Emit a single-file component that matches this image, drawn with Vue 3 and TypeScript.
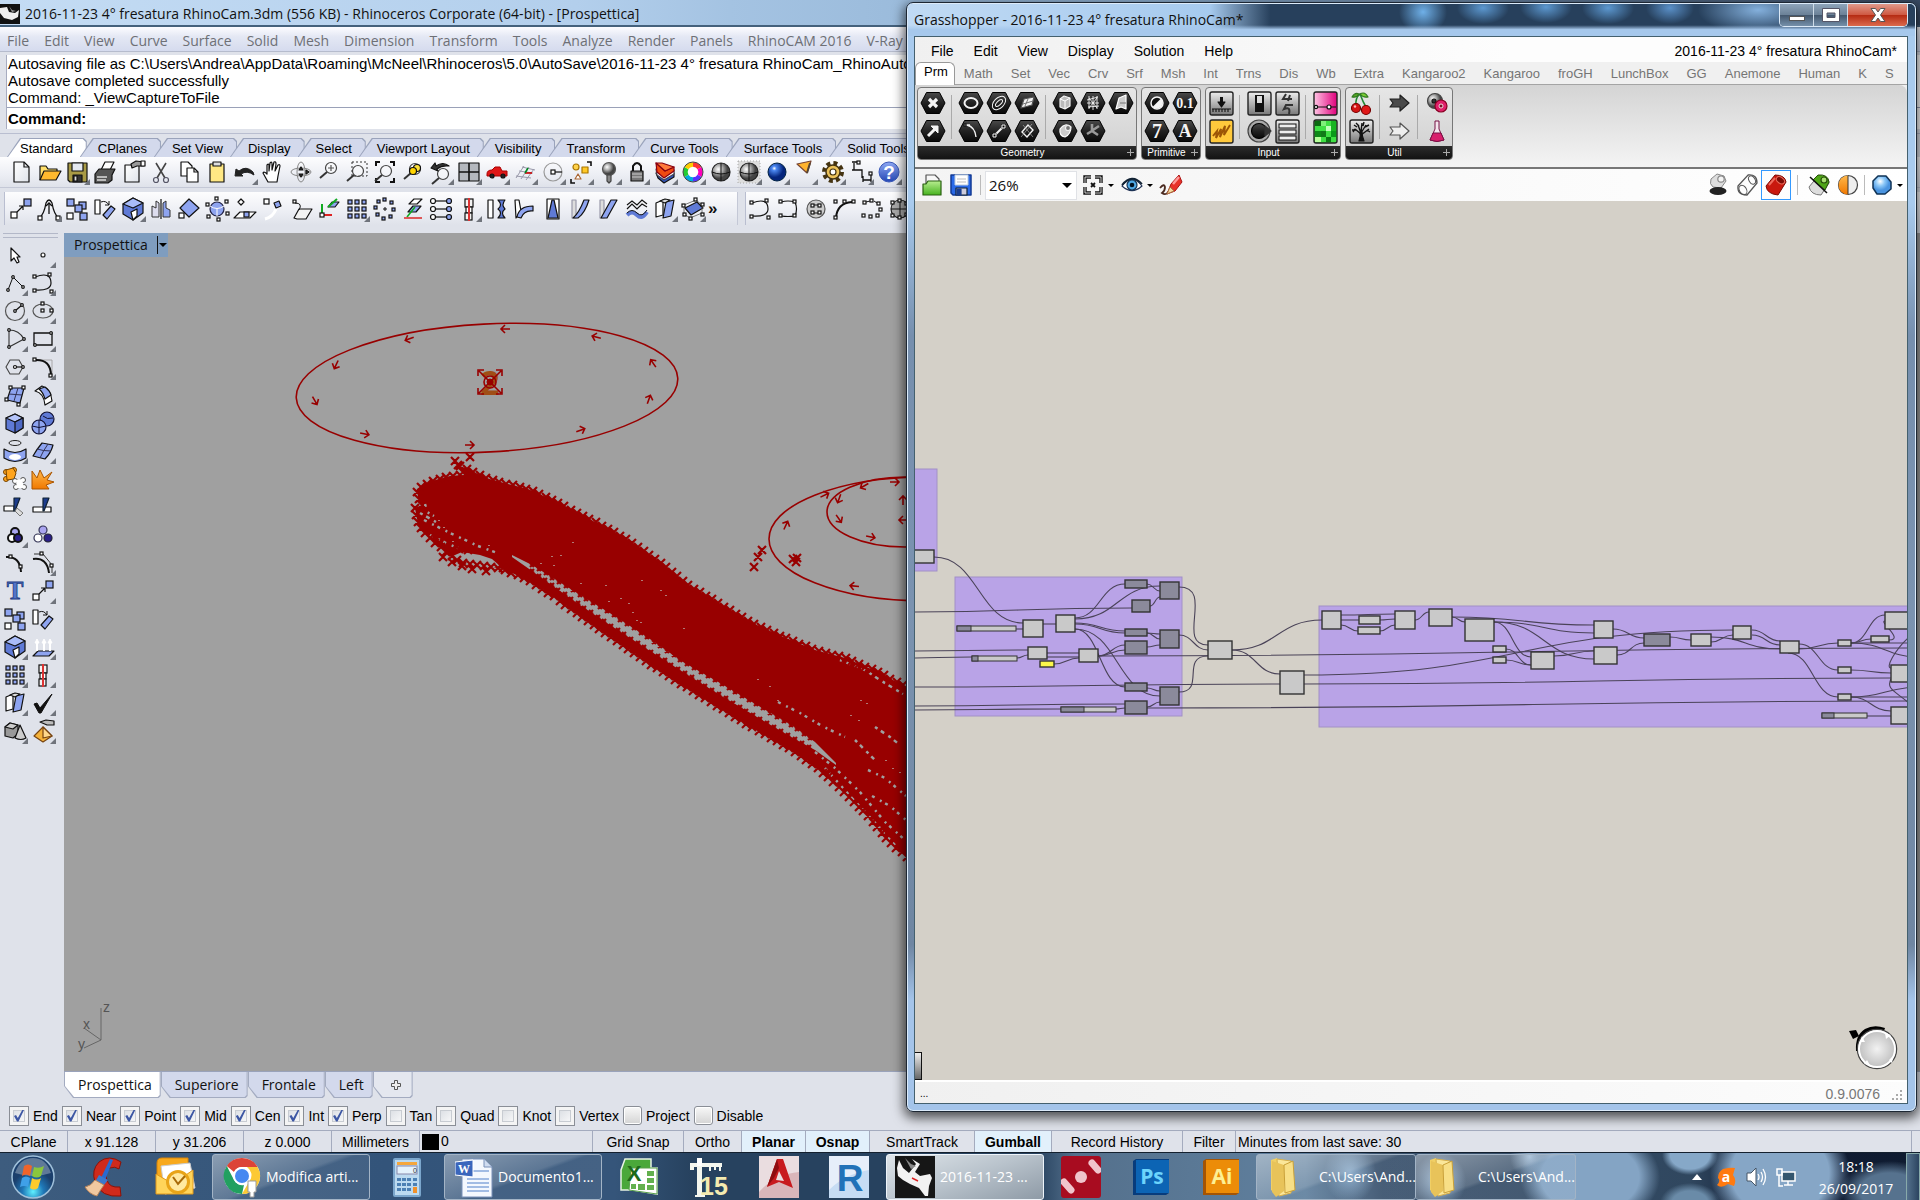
<script setup lang="ts">
import { ref } from 'vue'

type Pt = [number, number]

/* ---------- icon drawing helpers, all on a 28 x 28 box ---------- */
const K = '#111'
const sq = (x: number, y: number, s = 5, f = '#fff') =>
  `<rect x="${x}" y="${y}" width="${s}" height="${s}" fill="${f}" stroke="${K}" stroke-width="1.2"/>`
const ln = (d: string, w = 1.2, c = K) =>
  `<path d="${d}" fill="none" stroke="${c}" stroke-width="${w}"/>`
const sh = (d: string, f: string, c = K, w = 1.2) =>
  `<path d="${d}" fill="${f}" stroke="${c}" stroke-width="${w}" stroke-linejoin="round"/>`
const ci = (x: number, y: number, r: number, f = 'none', c = K, w = 1.2) =>
  `<circle cx="${x}" cy="${y}" r="${r}" fill="${f}" stroke="${c}" stroke-width="${w}"/>`
const tx = (x: number, y: number, s: number, t: string, f: string, fam = 'Liberation Sans', w = 700) =>
  `<text x="${x}" y="${y}" font-size="${s}" font-family="${fam}" font-weight="${w}" text-anchor="middle" fill="${f}">${t}</text>`
const B = '#8ea4f0'
const B2 = '#5f7ad6'
const G = '#888'
const lens = (x: number, y: number) =>
  ci(x, y, 5.5, 'rgba(255,255,255,.4)', '#444') + ln(`M${x - 4} ${y + 4}L${x - 11} ${y + 10}`, 2, '#333')
const corners = 'M5 8V4H9M19 4H23V8M23 20V24H19M9 24H5V20'
const hex = (inner: string) =>
  sh('M2 14L7.5 3.5H20.5L26 14L20.5 24.5H7.5Z', 'url(#gHex)', '#000', 1) + inner
const tile = (inner: string, f = 'url(#gTile)') =>
  `<rect x="3" y="3" width="23" height="23" rx="2" fill="${f}" stroke="#222" stroke-width="1.4"/>` + inner
const W = '#f4f4f4'

const icons: Record<string, string> = {
  new: sh('M7 4H17L22 9V24H7Z', 'url(#gPaper)') + ln('M17 4V9H22'),
  open: sh('M5 22V8H11L13 11H22V14', '#ffdf6a') + sh('M5 22L9 13H26L21 22Z', '#ffb92e'),
  save: sh('M5 5H24V24H7L5 22Z', '#a89a45') + sh('M9 5H20V13H9Z', '#e4e8f0') + sh('M10 17H19V24H10Z', '#333') + sh('M11 18H14V23H11Z', '#ddd'),
  print: sh('M10 12L14 4H23L19 12Z', '#fff') + sh('M4 16L8 11H24L21 17V22L17 25H4Z', '#555') + ln('M6 19H16M6 22H15', 1.5, '#ddd'),
  props: sh('M6 7H20V24H6Z', 'url(#gPaper)') + sh('M12 6L17 3L25 4V8L18 8L13 10Z', '#999') + sh('M22 3H26V8H22Z', '#fff'),
  cut: ln('M9 5L18 20M19 5L10 20', 1.6, '#444') + ci(9, 22, 2.5, 'none', '#556') + ci(19, 22, 2.5, 'none', '#556'),
  copy: sh('M6 4H13L17 8V18H6Z', '#fff') + sh('M12 10H19L23 14V24H12Z', '#fff') + ln('M19 10V14H23'),
  paste: sh('M7 6H21V24H7Z', '#ffe884') + sh('M10 4H18V8H10Z', '#ddd'),
  undo: sh('M4 18L5 11L8 13Q15 7 22 14L23 17Q16 12 10 16L12 18Z', '#222', '#222', 1),
  pan: sh('M9 24L4 15Q5 13 8 16L8 7Q10 5 10 8V13L11 5Q13 3 13 6V12L15 4Q17 3 17 6L16 13L19 7Q21 6 21 8L19 18L18 24Z', '#fff'),
  rotate: `<ellipse cx="14" cy="14" rx="10" ry="4" fill="none" stroke="${G}"/><ellipse cx="14" cy="14" rx="4" ry="10" fill="none" stroke="${G}"/>` + sh('M14 9L16 12H12ZM14 19L12 16H16Z', '#333') + sh('M19 12L22 14L19 16Z', '#555'),
  zoom: lens(16, 10) + ln('M13 10H19M16 7V13', 1.2, '#555'),
  zoomwin: `<rect x="9" y="4" width="15" height="14" fill="none" stroke="#333" stroke-dasharray="2 2"/>` + lens(15, 13),
  zoomext: ln(corners, 2) + lens(15, 13),
  zoomsel: lens(16, 11) + ci(18, 10, 3.5, '#ffe23c') + ci(14, 13, 3.5, '#ffd400'),
  zoomback: lens(16, 16) + sh('M4 10L8 5L9 8Q16 3 22 8Q15 7 10 11L11 13Z', '#333'),
  four: sh('M4 5H24V23H4Z', '#b4b8be') + ln('M14 5V23M4 14H24', 1.6),
  car: sh('M4 16Q4 12 9 12L12 9H17L19 13H24V18H4Z', '#e01818', '#a00', 1) + ci(9, 18, 2, '#222') + ci(20, 18, 2, '#222'),
  cplane: ln('M5 20L13 8M10 21L18 9M15 22L23 11M5 18L20 20M8 13L22 15M11 9L24 12', 1, '#99a') + ln('M14 15H21', 1.6, '#c00') + ln('M14 15L17 10', 1.6, '#082'),
  circ: ci(14, 14, 9, 'none', '#999') + sq(12, 12, 4) + ln('M16 14H23'),
  snap: ci(9, 9, 3, '#ffd24a', '#a70') + sh('M15 9H21V15H15Z', '#ffc928', '#a70') + sh('M11 16L14 21H8Z', '#fff', '#a63') + ln('M20 4H24V8M8 25H4V21', 1.6),
  bulb: ci(14, 11, 6.5, 'url(#gGrey)', '#555') + sh('M12 17H16V23L14 25L12 23Z', '#888', '#444'),
  lock: ln('M10 14V8Q14 2 18 8V14', 2) + sh('M8 13H20V23H8Z', '#777') + ln('M9 16H19M9 19H19', 1, '#ccc'),
  layers: sh('M5 15L13 21L23 15V19L13 25L7 20Z', '#3357c0') + sh('M5 11L13 19L23 12V16L13 22L6 17Z', '#fff', '#445') + sh('M5 5L14 13L23 9V13L13 20L6 14Z', '#f04a12', '#801') + sh('M5 5L11 5L23 9L14 13Z', '#ff7a3c', '#801'),
  wheel: ci(14, 14, 7, '#fff', '#888', 0) + '<g fill="none" stroke-width="4.5"><path d="M14 6.5A7.5 7.5 0 0 1 20.5 10.2" stroke="#f33"/><path d="M20.5 10.2A7.5 7.5 0 0 1 20.5 17.8" stroke="#f0b"/><path d="M20.5 17.8A7.5 7.5 0 0 1 14 21.5" stroke="#53f"/><path d="M14 21.5A7.5 7.5 0 0 1 7.5 17.8" stroke="#0ad"/><path d="M7.5 17.8A7.5 7.5 0 0 1 7.5 10.2" stroke="#2c3"/><path d="M7.5 10.2A7.5 7.5 0 0 1 14 6.5" stroke="#fc0"/></g>' + ci(14, 14, 10, 'none', '#444', 1),
  sphere: ci(14, 14, 9, 'url(#gGrey)', '#222') + ln('M14 5V23M5 14Q14 18 23 14', 1),
  sphere2: '<rect x="3" y="3" width="22" height="22" fill="#ddd" stroke="#aaa" stroke-dasharray="1 2"/>' + ci(14, 14, 9, 'url(#gGrey)', '#222') + ln('M14 5V23M5 14Q14 18 23 14', 1),
  ball: ci(14, 14, 9, 'url(#gBall)', '#024', 1),
  spot: sh('M6 6L20 3L16 15Z', '#ffb32e', '#743') + ln('M19 5L16 15', 2, '#543'),
  gear: '<circle cx="14" cy="14" r="8.5" fill="none" stroke="#443311" stroke-width="5" stroke-dasharray="3.7 3"/>' + ci(14, 14, 7, '#ecc25a', '#431', 1.5) + ci(14, 14, 3, '#fff', '#431'),
  dim: ln('M5 4H12M5 12H15V20M7 5V12M16 18V24M24 16V24M16 22H24', 1.3) + sq(10, 3, 3) + sq(22, 14, 3),
  help: ci(14, 14, 10, 'url(#gHelp)', '#3a58b8', 1) + tx(14, 21, 19, '?', '#fff'),

  move: sq(4, 17, 6) + sq(17, 4, 7, B) + ln('M10 17L16 11M12 11H16V15', 1.2),
  bend: ln('M4 23Q9 20 11 8Q14 2 17 8Q19 20 24 23M14 8V19', 1.3) + ln('M11 11L14 8L17 11', 1.3) + sq(3, 21, 4) + sq(21, 21, 4),
  copyobj: sq(4, 4, 7, B) + sq(4, 18, 6) + sq(16, 7, 7, B) + sq(12, 10, 7, B) + sq(17, 18, 7, B),
  rot2: sh('M4 5H9V19H4Z', '#fff') + sh('M12 20L20 11L24 14L16 24Z', B) + ln('M10 7Q15 5 18 10M14 10H18V6', 1),
  box: sh('M4 9L14 3L24 8V18L14 25L4 19Z', B2) + sh('M4 9L14 3L24 8L14 13Z', '#a9bcf8') + sh('M12 17L18 14V21L14 25Z', '#fff'),
  mirror: ln('M14 4V24', 1.2) + sh('M12 8L9 6L9 13L5 11V22H12Z', '#dde', '#333', 1) + sh('M16 8L19 6L19 13L23 15V22H16Z', B, '#333', 1),
  orient: sh('M14 4L24 13L14 22L5 13Z', B) + sq(4, 18, 5),
  cage: ci(14, 14, 7, B, '#224') + ln('M7 11Q14 16 21 11M14 14V21', 1, '#fff') + sq(3, 8, 3) + sq(12, 2, 3) + sq(22, 5, 3) + sq(4, 20, 3) + sq(14, 23, 3) + sq(23, 17, 3),
  project: sh('M10 4L13 7L10 10L7 7Z', '#fff') + sh('M3 23L9 17H25L19 23Z', '#fff') + sq(13, 17, 5, B),
  arcput: sq(5, 4, 5) + sh('M15 8L20 6L22 11L17 13Z', B) + ln('M17 14Q14 22 6 24', 3, '#fff'),
  shear: sh('M7 23L12 14H25L19 24H10Z', '#f3f3f3') + sq(6, 5, 3) + ln('M8 8Q16 8 12 15', 1),
  axes: ln('M7 10V20H17', 2, '#d22') + ln('M7 18V9', 2, '#1a2') + sh('M13 12L17 7H24L20 12Z', B) + ln('M13 12L22 4', 2, '#1a2') + sq(5, 18, 4),
  grid: [5, 12, 19].map(x => [5, 12, 19].map(y => sq(x, y, 4, B)).join('')).join(''),
  polar: [[12, 3], [19, 6], [21, 13], [18, 20], [11, 22], [5, 18], [3, 11], [6, 5]].map(p => sq(p[0], p[1], 3, B)).join('') + ln('M14 12V16M12 14H16', 1),
  flow: sh('M10 9L15 4H23L18 9Z', '#fff') + sh('M9 17L14 11H22L17 17Z', B) + ln('M8 22L16 12', 1.6, '#1a2') + ln('M5 23H23', 1.6, '#d33'),
  pts: [6, 14, 22].map(y => ci(6, y, 2.5, '#fff') + ln(`M9 ${y}H19`, 1.2) + ci(22, y, 2.5, B)).join(''),
  align: sq(10, 4, 8, '#f2f2f2') + sq(11, 12, 6) + sq(10, 18, 7, '#f2f2f2') + ln('M14 3V26', 2, '#d33'),
  twist: sh('M5 5H10V23H5Z', '#fff') + sh('M15 5H22Q18 10 22 14Q17 18 22 23H15Q20 18 15 14Q20 10 15 5Z', B2),
  arcb: sh('M4 5H8L10 16L5 23Z', '#fff') + sh('M6 22Q8 11 22 11V16Q13 15 10 23Z', B),
  taper: sh('M8 4H20V24H8Z', '#fff') + sh('M13 5L9 23H19L15 5Z', B2),
  flowb: sh('M5 5H9V23H5Z', '#ddd', '#99a') + sh('M6 23Q12 18 17 5H22Q18 18 11 23Z', B),
  shearb: sh('M5 5H9V23H5Z', '#ddd', '#99a') + sh('M6 23L16 5H22L12 23Z', B),
  smooth: ln('M4 10L9 6L14 10L19 5L24 9M4 14L9 9L14 14L19 9L24 12', 1.2) + ln('M4 20Q9 15 14 20T24 17', 4, B2) + ln('M4 18Q9 13 14 18T24 15', 1),
  book: sh('M5 8L12 5V20L5 22Z', '#fff') + sh('M15 7L23 5L20 21L12 23Z', B) + sh('M9 6L14 4L19 5L14 8Z', '#ddd'),
  cage2: sh('M6 13L18 7L24 13L12 20Z', B2) + ln('M5 10L17 5L23 10V18L11 23L5 19Z', .8, '#555') + sq(3, 9, 3) + sq(15, 3, 3) + sq(22, 8, 3) + sq(4, 18, 3) + sq(10, 22, 3) + sq(22, 18, 3),

  c1: ln('M6 8Q22 2 22 14Q22 22 6 21', 1.2) + sq(4, 6, 3) + sq(19, 4, 3) + sq(4, 20, 3) + sq(21, 21, 3),
  c2: ln('M7 7Q14 5 21 7Q24 14 21 21Q14 22 7 21', 1.2) + sq(5, 5, 3) + sq(19, 5, 3) + sq(5, 19, 3) + sq(19, 19, 3),
  c3: ci(14, 14, 9, '#ccc', '#555') + sq(9, 9, 3) + sq(16, 9, 3) + sq(9, 16, 3) + sq(16, 16, 3) + ln('M12 10H16M12 18H16', 1),
  c4: ln('M6 23Q7 8 22 7', 2) + sq(4, 21, 3) + sq(4, 5, 3) + sq(13, 5, 3) + sq(22, 5, 3),
  c5: [[5, 6], [12, 4], [19, 7], [21, 13], [18, 19], [11, 20], [4, 19]].map(p => sq(p[0], p[1], 3)).join('') + ln('M8 7L12 6M16 6L19 8', 1),
  c6: ci(14, 14, 9, '#aaa', '#222') + ln('M14 5V23M5 14H23', 1) + [[5, 6], [12, 4], [19, 7], [5, 19], [12, 21], [19, 18]].map(p => sq(p[0], p[1], 3)).join(''),

  cursor: sh('M10 7V20L13 17L16 22L18 21L16 16H19Z', '#fff'),
  point: ci(14, 14, 2, '#fff', '#222'),
  pline: ln('M7 21L12 8L22 18', 1) + ci(7, 21, 1.3, '#fff') + ci(12, 8, 1.3, '#fff') + ci(22, 18, 1.3, '#fff'),
  circle: ci(14, 14, 9.5, 'none', '#555') + ln('M14 14L21 8') + ci(14, 14, 1.3, '#fff') + ci(21, 8, 1.3, '#fff'),
  ellipse: '<ellipse cx="14" cy="14" rx="10" ry="7" fill="none" stroke="#555" stroke-width="1.2"/>' + sq(12, 5, 3) + sq(12, 12, 3) + sq(21, 12, 3),
  arc: ln('M8 5V22L23 14Q18 5 8 5', 1.1, '#333') + ci(8, 5, 1.3, '#fff') + ci(8, 22, 1.3, '#fff') + ci(23, 14, 1.3, '#fff'),
  rect: ln('M5 8H23V20H5Z', 1.3) + ci(22, 8, 1.3, '#fff') + ci(6, 20, 1.3, '#fff'),
  poly: ln('M5 14L9 7H18L22 14L18 21H9Z', 1.1, '#444') + ln('M14 14H22') + ci(14, 14, 1.5, '#fff') + ci(22, 14, 1.3, '#fff'),
  fillet: ln('M6 7H23V24', .8, '#999') + ln('M6 7Q22 6 22 23', 2) + sq(4, 5, 3) + sq(20, 21, 3),
  srf: sh('M10 7L23 7L19 22L6 19Z', B) + ln('M17 7L13 20M8 13L21 14', 1, '#335') + sq(8, 5, 3) + sq(21, 5, 3) + sq(4, 17, 3) + sq(16, 22, 3),
  srf2: sh('M6 10L13 5Q22 8 23 20L16 24Q15 12 6 10Z', '#fff') + sh('M10 8L16 6Q21 10 22 14L16 18Q14 11 10 8Z', B),
  cube: sh('M5 9L14 5L22 9V19L14 24L5 20Z', B2) + sh('M5 9L14 5L22 9L14 13Z', '#b4c4fa') + sh('M14 13L22 9V19L14 24Z', '#4e69c4'),
  balls: ci(18, 10, 7, B2, '#113') + ci(10, 18, 7, B, '#113') + ln('M3 17Q10 20 17 17M10 11V25M14 7Q18 11 24 9', 1, '#113'),
  loft: '<ellipse cx="14" cy="6" rx="6" ry="2.5" fill="none" stroke="#222"/>' + sh('M3 12Q14 19 25 12V21Q14 28 3 21Z', B) + '<ellipse cx="14" cy="20" rx="6" ry="3" fill="#fff"/>',
  patch: sh('M4 19Q8 12 13 6L24 8Q22 16 16 22Z', B) + ln('M8 12Q14 14 22 14M11 21Q14 14 19 7', 1, '#335'),
  puzzle: '<g fill="#ffa41c" stroke="#740"><circle cx="5" cy="7" r="2.500"/><circle cx="13" cy="5" r="2.500"/><circle cx="5" cy="14" r="2.500"/><path d="M5 5L12 3L15 8L13 14L6 15Z"/></g><g fill="#fff" stroke="#555"><circle cx="14" cy="16" r="2.500"/><circle cx="22" cy="15" r="2.500"/><circle cx="15" cy="22" r="2.500"/><circle cx="23" cy="22" r="2.500"/><path d="M15 15L21 14L23 23L16 23Z" stroke="none"/></g>',
  burst: sh('M3 24V6L8 13L11 5L15 13L23 7L18 15L25 17L17 20L20 24Z', 'url(#gFire)', '#a50', 1),
  trim: sh('M3 13H13V18H3Z', '#fff') + sh('M13 5H19L14 18H13Z', '#1c3c8c', '#123') + sh('M16 15L22 20L19 23L14 18Z', '#ddd', '#777', 1),
  split: sh('M4 14H22V19H4Z', '#fff') + sh('M14 5H20L15 18H14Z', '#1c3c8c', '#123'),
  join: ci(14, 11, 4, '#a9a4f0', K, 2) + ci(11, 17, 4, '#fff', K, 2) + ci(17, 17, 4, '#2a1f88', K, 2),
  group: ci(14, 9, 4, '#a9a4f0', '#335') + ci(9, 17, 4, '#fff', '#335') + ci(19, 17, 4, '#2a1f88', '#223'),
  edit1: ln('M5 8Q19 7 20 23', 2) + sq(8, 6, 3) + sq(18, 16, 3),
  edit2: ln('M4 10Q18 8 20 24', 2) + ln('M5 5H14L23 16V24', 1, '#333') + sq(11, 3, 3) + sq(21, 15, 3),
  text: '<g stroke="#223a80" stroke-width=".8">' + tx(14, 22, 25, 'T', '#5475c8', 'Liberation Serif') + '</g>',
  extrude: sh('M4 23L9 18H25L20 23Z', B) + ln('M8 18V9M15 18V9M21 18V9', 2, '#fff') + sh('M8 6L6 10H10ZM15 6L13 10H17ZM21 6L19 10H23Z', '#fff', '#fff', 1),
  check: sh('M5 15L8 14L11 19L23 5L12 24H10Z', K, K, 1),
  solids: sh('M4 10L9 6L17 8V17L12 21L4 19Z', '#999') + sh('M4 10L9 6L17 8L12 12Z', '#ccc') + sh('M19 8L25 21Q20 24 14 21Z', '#ccc'),
  pyramid: sh('M14 10L23 19L14 25L5 19Z', '#f5b23a', '#741') + sh('M14 10L23 19L14 21Z', '#ffd88c', '#741') + sh('M11 5L17 3L25 4V8L18 8Z', '#bbb'),

  hX: hex(ln('M10 10L18 18M18 10L10 18', 3.2, W)),
  hArrow: hex(ln('M9 19L17 11', 3, W) + sh('M12 9H19V16Z', W, W, 1)),
  hEll: hex('<ellipse cx="14" cy="14" rx="6.5" ry="5" fill="none" stroke="#f4f4f4" stroke-width="2"/>'),
  hArc: hex(ln('M8 8H13M10 8Q18 10 19 20', 1.4, W) + sq(7, 7, 2)),
  hRings: hex('<g transform="rotate(-45 14 14)" fill="none" stroke="#f4f4f4"><ellipse cx="14" cy="14" rx="8" ry="5"/><ellipse cx="14" cy="14" rx="4.5" ry="2"/></g>'),
  hLine: hex(ln('M10 18L18 10', 2, W) + sq(8, 17, 3, '#000') + sq(17, 8, 3, '#000') + ln('M8 17h3v3h-3zM17 8h3v3h-3z', 1, W)),
  hPlane: hex(sh('M8 19L11 10L21 8L19 16Z', W, '#555') + ln('M12 17L15 10M10 15L20 12', 1, '#777')),
  hRect: hex(ln('M9 15L15 8L20 13L14 20Z', 1.4, W) + ln('M10 8L20 20M19 7L8 20', .7, '#aaa')),
  hBox: hex(sh('M9 10L13 7L19 9V17L14 20L9 18Z', '#bbb', W) + ln('M9 10L14 12L19 9M14 12V20', 1, '#fff')),
  hMesh: hex(ln('M8 11L19 8M9 18L20 17M10 7V20M18 7V20M14 7V21M8 14H20M10 9L18 19M18 9L10 19', .9, W)),
  hSurf: hex(sh('M12 9L19 6V20L14 18L9 20Z', '#ccc', '#fff') + ln('M13 14H19', 1, '#777')),
  hBrep: hex(sh('M9 12Q14 5 20 10Q20 17 14 20Q8 19 9 12Z', '#ccc', '#fff') + ci(17, 11, 2.5, '#777', '#eee')),
  hTwig: hex(ln('M8 17L13 14L19 18M13 14V7M14 13L20 9', 2.6, '#999')),
  hBool: hex(ci(14, 14, 6, '#111', W, 1.5) + sh('M18 9.5A6 6 0 0 1 9.5 18Z', W, W, 0)),
  hNum: hex(tx(14, 19, 14, '0.1', W, 'Liberation Serif')),
  hSeven: hex(tx(14, 21, 20, '7', W, 'Liberation Serif')),
  hA: hex(tx(14, 20, 18, 'A', W, 'Liberation Serif')),
  tDown: tile(ln('M14.500 8V14', 3) + sh('M11 13H18L14.500 18Z', K) + ln('M5 20H24M6 20V23M9 20V23M12 20V23M15 20V23M18 20V23M21 20V23', 1.1)),
  tScrib: tile(ln('M6 19L10 14L9 21L14 12L13 20L18 9L17 18L23 8', 1.9, '#9c5606'), '#ffc93c'),
  tSwitch: tile('<rect x="10" y="6" width="9" height="17" fill="#111"/><rect x="12" y="7" width="5" height="7" fill="#ddd"/>'),
  tKnob: ci(14, 14, 11, '#aaa', '#444') + ci(14, 14, 7.5, 'url(#gHex)', '#000') + sh('M20 9L26 14L20 19Z', '#333', '#333'),
  tDig: tile(ln('M13 5L10 10H19M17 6L15 12M20 16H13L11 20Q18 17 16 25', 2, '#333')),
  tList: tile('<g fill="#eee" stroke="#111"><rect x="6" y="7" width="17" height="4"/><rect x="6" y="13" width="17" height="4"/><rect x="6" y="19" width="17" height="4"/></g>'),
  tPink: tile(ln('M4 18H25', 1.2) + ci(5, 18, 1.6, '#fff') + ci(18, 18, 2, '#fff'), 'url(#gPink)'),
  tGreen: tile('<g><rect x="4" y="4" width="6" height="5" fill="#0a6a10"/><rect x="10" y="4" width="5" height="5" fill="#7ff07a"/><rect x="15" y="9" width="5" height="5" fill="#bfffba"/><rect x="20" y="4" width="5" height="10" fill="#18b422"/><rect x="4" y="14" width="6" height="6" fill="#0d8a17"/><rect x="10" y="14" width="5" height="6" fill="#117b18"/><rect x="15" y="20" width="5" height="5" fill="#0a7a12"/><rect x="4" y="20" width="6" height="5" fill="#b6ff9a"/><rect x="20" y="14" width="5" height="6" fill="#0b9a1a"/></g>', '#3fe044'),
  cherry: ln('M9 17Q8 9 13 5Q16 13 19 18', 1.6, '#283') + sh('M13 5Q18 2 21 8Q16 9 13 5Z', '#7c3', '#372') + sh('M12 5Q8 3 5 8Q10 9 12 5Z', '#5a2', '#372') + ci(9, 19, 4.5, '#d41414', '#700') + ci(19, 21, 4.5, '#e01818', '#700') + ci(8, 17.5, 1.2, '#fbb', 'none'),
  tTree: tile(sh('M12 24Q14 19 13 15H15Q15 19 17 24Z', K) + ln('M14 17L8 12M14 16L11 8M14 15L15 6M14 16L19 8M14 18L22 12M9 13H5M10 10L7 8M20 13L23 15M18 10L22 8M12 9L9 6M16 9L17 5M8 12L6 15', 1.4)),
  arrD: sh('M5 10H15V6L24 14L15 22V18H5L8 14Z', '#4a4a4a', '#222'),
  arrL: sh('M5 10H15V6L24 14L15 22V18H5L8 14Z', '#eee', '#555'),
  gall: ci(12, 12, 7.5, 'url(#gGrey)', '#444') + ci(11, 12, 2, '#333') + ci(18, 17, 6, '#e0206a', '#802') + ci(18, 17, 2, '#712', '#fff', .8),
  flask: sh('M12 4H16V12L21 23Q14 26 7 23L12 12Z', '#f4e6ee', '#714', 1) + sh('M10 16H18L21 23Q14 26 7 23Z', '#d81e6c', '#714', 1),

  ghOpen: sh('M8 9V4H17L21 8V13H8Z', '#f7f7f7', '#555') + sh('M5 24V13H8L10 10H23V24Z', 'url(#gGreen)', '#286010'),
  ghSave: sh('M4 4H24V24H6L4 22Z', '#2a6ae8', '#123a94', 1.5) + sh('M8 4H21V14H8Z', '#fff', '#bcd', 1) + sh('M9 17H20V24H9Z', '#ccd', '#123') + sh('M10 18H14V24H10Z', '#1b3f90', '#1b3f90') + ln('M10 8H19M10 11H19', 1, '#bbb'),
  ghZoom: ln('M6 12V6H12M16 6H22V12M22 16V22H16M12 22H6V16', 3.4, '#111') + ln('M6 12V6H12M16 6H22V12M22 16V22H16M12 22H6V16', .8, '#fff') + ln('M12 12L16 16M16 12L12 16', 1.8),
  ghEye: sh('M4 15Q14 2 24 15Q14 24 4 15Z', '#fff', '#235') + ci(14, 14, 5, '#4fa8e4', '#135') + ci(14, 14, 2.3, '#012', 'none') + ln('M4 14Q14 2 24 13', 1.8, '#123'),
  ghPen: ln('M3 17Q7 12 8 16Q8 20 5 22Q9 25 12 20', 1.8, '#4a2a20') + sh('M10 23L14 13L22 4L25 11L18 20Z', '#e8322a', '#a11', 1) + sh('M10 23L13 16L17 20Z', '#f7d7a0', '#a74', 1) + ln('M16 13L22 6', 2.4, '#f99'),
  cyGrey: sh('M7 8L13 3L20 5L22 10L17 17L9 16Q5 13 7 8Z', '#ddd', '#888', 1) + ci(17, 8, 3.2, '#f4f4f4', '#888') + '<ellipse cx="14" cy="20" rx="8.500" ry="4" fill="#222"/>',
  cyWire: ln('M5 15L15 4Q24 3 24 12L14 24Q4 24 5 15Z', 1.3, '#555') + '<ellipse cx="19" cy="9" rx="3" ry="4.500" transform="rotate(-30 19 9)" fill="none" stroke="#555"/><ellipse cx="10" cy="19" rx="3.500" ry="5" transform="rotate(-30 10 19)" fill="none" stroke="#555"/>',
  cyRed: sh('M4 15L13 4Q23 4 24 11L16 24Q5 23 4 15Z', '#c9180e', '#7a0a04', 1) + '<ellipse cx="18.500" cy="9" rx="4.500" ry="3" transform="rotate(35 18 9)" fill="#7d0b05" stroke="#e86a5a"/>' + ln('M7 14L13 7', 2, '#ee6a5c'),
  cyGreen: sh('M4 16L13 5Q24 4 24 12L16 24Q6 24 4 16Z', '#ddd', '#777', 1) + sh('M8 9L13 4Q23 3 24 11L20 19Z', '#4ea516', '#264e0a', 1) + ci(19, 9, 3, '#a7e070', '#264e0a') + ln('M5 6L22 22', 1.5),
  halfBall: ci(14, 14, 9.5, '#eee', '#444') + sh('M14 4.500A9.500 9.500 0 0 0 14 23.500Z', 'url(#gFire)', '#a50', 0) + ln('M14 5V23', 1, '#333'),
  octo: sh('M10 5H18L23 11V18L17 23H9L5 17V10Z', 'url(#gSky)', '#135', 1.5),
}

const row1 = 'new open save* print props cut copy paste undo* pan rotate zoom zoomwin zoomext zoomsel zoomback* four* car* cplane* circ* snap* bulb* lock* layers* wheel* sphere sphere2* ball* spot* gear* dim* help*'.split(' ')
const row2 = 'move bend* copyobj rot2 box* mirror orient cage project arcput shear axes grid* polar flow pts align* twist arcb taper flowb shearb smooth book* cage2*'.split(' ')
const row3 = 'c1 c2 c3 c4 c5 c6'.split(' ')
const side = 'cursor point* pline* c1* circle* ellipse* arc* rect* poly* fillet* srf* srf2* cube* balls* loft* patch* puzzle burst trim split join* group edit1 edit2* text move* copyobj rot2 box* extrude* grid* align* book* check* solids* pyramid*'.split(' ')
const name = (s: string) => s.replace('*', '')
const fly = (s: string) => s.endsWith('*')

const rhinoMenu = ['File', 'Edit', 'View', 'Curve', 'Surface', 'Solid', 'Mesh', 'Dimension', 'Transform', 'Tools', 'Analyze', 'Render', 'Panels', 'RhinoCAM 2016', 'V-Ray']
const toolTabs = ['Standard', 'CPlanes', 'Set View', 'Display', 'Select', 'Viewport Layout', 'Visibility', 'Transform', 'Curve Tools', 'Surface Tools', 'Solid Tools']
const viewTabs = ['Prospettica', 'Superiore', 'Frontale', 'Left']
const snaps = ref([
  ['End', true], ['Near', true], ['Point', true], ['Mid', true], ['Cen', true], ['Int', true], ['Perp', true],
  ['Tan', false], ['Quad', false], ['Knot', false], ['Vertex', false], ['Project', false], ['Disable', false],
].map(([label, on]) => ({ label: label as string, on: on as boolean })))
const command = ref('')
const zoomLevel = ref('26%')

const ghMenu = ['File', 'Edit', 'View', 'Display', 'Solution', 'Help']
const ghTabs = ['Prm', 'Math', 'Set', 'Vec', 'Crv', 'Srf', 'Msh', 'Int', 'Trns', 'Dis', 'Wb', 'Extra', 'Kangaroo2', 'Kangaroo', 'froGH', 'LunchBox', 'GG', 'Anemone', 'Human', 'K', 'S']
const ribbon = [
  { name: 'Geometry', parts: [[['hX', 'hArrow']], [['hEll', 'hArc'], ['hRings', 'hLine'], ['hPlane', 'hRect']], [['hBox', 'hBrep'], ['hMesh', 'hTwig'], ['hSurf']]] },
  { name: 'Primitive', parts: [[['hBool', 'hSeven'], ['hNum', 'hA']]] },
  { name: 'Input', parts: [[['tDown', 'tScrib']], [['tSwitch', 'tKnob'], ['tDig', 'tList']], [['tPink', 'tGreen']]] },
  { name: 'Util', parts: [[['cherry', 'tTree']], [['arrD', 'arrL']], [['gall', 'flask']]] },
]

/* ---------- perspective viewport ---------- */
const top: Pt[] = [[422, 505], [418, 497], [417, 489], [432, 481], [450, 476], [464, 475], [460, 466], [470, 470], [486, 478], [504, 483], [528, 489], [548, 498], [573, 511], [593, 521], [617, 534], [637, 546], [662, 564], [688, 585], [715, 601], [748, 621], [781, 636], [815, 650], [845, 658], [876, 671], [908, 688]]
const bottom: Pt[] = [[415, 508], [418, 524], [427, 536], [446, 552], [462, 563], [503, 569], [528, 580], [552, 595], [589, 622], [619, 642], [655, 667], [689, 689], [722, 709], [755, 729], [792, 750], [819, 769], [842, 790], [869, 817], [885, 837], [899, 850], [908, 858]]
const gap: Pt[] = [[512, 556], [532, 568], [553, 582], [577, 598], [613, 621], [647, 643], [683, 667], [720, 689], [757, 711], [793, 732], [815, 746], [836, 764]]
const halves = [1, 3, 4, 5, 6, 6, 5, 6, 6, 6, 4, 1]
const hole = 'M448 558L462 552L480 555L492 559L500 566L486 570L466 566Z'

const sample = (p: Pt[], step: number): Pt[] => {
  const out: Pt[] = []
  let carry = 0
  for (let i = 1; i < p.length; i++) {
    const dx = p[i][0] - p[i - 1][0]
    const dy = p[i][1] - p[i - 1][1]
    const len = Math.hypot(dx, dy)
    let t = carry
    for (; t < len; t += step) out.push([p[i - 1][0] + (dx * t) / len, p[i - 1][1] + (dy * t) / len])
    carry = t - len
  }
  return out
}
const crosses = (p: Pt[], r = 3) => p.map(([x, y]) => `M${Math.round(x) - r} ${Math.round(y) - r}l${2 * r} ${2 * r}m0 ${-2 * r}l${-2 * r} ${2 * r}`).join('')
const asPath = (p: Pt[]) => 'M' + p.map(q => q.join(' ')).join('L')
const gapUp: Pt[] = gap.map(([x, y], i) => [x, y - halves[i]])
const gapDown: Pt[] = gap.map(([x, y], i) => [x, y + halves[i]])
const gapShape = asPath([...gapUp, ...[...gapDown].reverse()]) + 'Z'
const mass = asPath([...top, ...[...bottom].reverse()]) + 'Z'
const massCrosses = [
  crosses(sample(top, 7), 4), crosses(sample(bottom, 7), 4),
  crosses(sample(gapUp.slice(1, 11), 8), 2), crosses(sample(gapDown.slice(1, 11), 8), 2),
  crosses([[455, 461], [470, 457], [458, 465], [443, 557], [452, 562], [462, 566], [472, 569], [486, 571], [503, 568], [468, 550], [459, 549]], 4),
  crosses([[762, 550], [758, 557], [754, 567], [793, 559], [796, 562], [797, 558]], 4),
].join('')
/* thin places where the background shows through the tool path */
const streaks: Pt[][] = [
  [[424, 520], [450, 533], [478, 546], [500, 554]],
  [[420, 513], [436, 522]],
  [[430, 535], [446, 543], [458, 548]],
  [[710, 704], [745, 724], [770, 740], [800, 756], [835, 784], [870, 819], [895, 845]],
  [[815, 752], [835, 768], [860, 792], [885, 822], [905, 840]],
  [[825, 768], [850, 796], [880, 828]],
  [[778, 702], [800, 713], [822, 726], [845, 737]],
  [[855, 740], [875, 760]],
  [[872, 796], [890, 806], [906, 820]],
  [[840, 660], [865, 670], [880, 680], [903, 694]],
  [[868, 770], [885, 778], [906, 796]],
  [[875, 727], [890, 737], [900, 745]],
  [[425, 504], [427, 512], [434, 516]],
]
const specks: Pt[] = [[620, 598], [628, 603], [640, 622], [608, 601], [580, 583], [540, 563], [641, 580], [665, 595], [553, 565], [683, 628], [757, 679], [769, 686], [777, 700], [605, 585], [636, 620], [551, 556], [860, 700], [866, 703], [850, 715], [858, 720], [632, 612], [660, 590], [572, 542], [560, 555], [438, 520], [443, 527], [452, 541], [488, 545], [415, 502], [892, 768], [899, 772], [885, 760]]
const arrows: [number, number, number][] = [
  [505, 329, 180], [596, 337, 195], [653, 363, 235], [649, 399, 290], [581, 430, 340], [470, 445, 0], [365, 434, 12], [315, 401, 60], [336, 365, 115], [409, 339, 160],
  [786, 525, 295], [825, 495, 335], [839, 499, 110], [864, 486, 150], [895, 482, 0], [839, 519, 55], [871, 537, 12], [854, 586, 185], [903, 500, 270], [903, 520, 180],
]

/* ---------- node canvas ---------- */
const groups = [[905, 469, 32, 102], [955, 577, 227, 139], [1319, 606, 620, 121]]
const nodes: [number, number, number, number, string?][] = [
  [905, 550, 29, 13], [1023, 620, 20, 17], [1056, 615, 19, 17], [1028, 647, 19, 12], [1040, 661, 14, 6, 'y'], [1079, 649, 19, 13],
  [1125, 580, 22, 8, 'd'], [1132, 600, 18, 12, 'd'], [1160, 582, 19, 17, 'd'], [1125, 629, 22, 7, 'd'], [1125, 641, 22, 13, 'd'], [1160, 630, 19, 18, 'd'],
  [1125, 683, 22, 8, 'd'], [1125, 701, 22, 13, 'd'], [1160, 687, 19, 18, 'd'], [1208, 641, 24, 18], [1280, 671, 24, 23],
  [1322, 611, 19, 18], [1359, 616, 21, 8], [1358, 627, 22, 7], [1395, 611, 20, 18], [1429, 609, 23, 17], [1465, 619, 29, 22],
  [1493, 646, 13, 6], [1493, 657, 13, 6], [1531, 652, 23, 17], [1594, 621, 19, 17], [1594, 647, 23, 17], [1644, 634, 26, 12, 'd'],
  [1691, 634, 20, 12], [1733, 626, 18, 13], [1780, 641, 19, 12], [1838, 640, 13, 6], [1871, 636, 18, 6], [1885, 612, 40, 17],
  [1838, 667, 13, 6], [1891, 665, 35, 17], [1838, 694, 13, 6], [1891, 707, 35, 17],
]
const sliders = [[957, 626, 59, 14], [972, 656, 45, 6], [1061, 707, 55, 23], [1822, 713, 45, 12]]
const wires = [
  [934, 557, 1023, 623], [1043, 624, 1056, 624], [1016, 629, 1023, 629], [905, 612, 1132, 608], [905, 651, 1028, 650], [905, 658, 972, 657],
  [1017, 658, 1028, 655], [1047, 653, 1079, 653], [1047, 657, 1079, 657], [1054, 664, 1079, 658], [1075, 618, 1125, 584], [1075, 619, 1160, 586],
  [1075, 623, 1125, 631], [1075, 624, 1125, 633], [1075, 629, 1125, 687], [1075, 629, 1160, 696], [1147, 584, 1160, 591], [1150, 606, 1160, 597],
  [1147, 633, 1160, 634], [1147, 633, 1160, 639], [1147, 647, 1160, 645], [1098, 656, 1125, 645], [1098, 656, 1125, 650], [1098, 656, 1920, 648],
  [905, 687, 1280, 684], [1304, 684, 1891, 678], [905, 706, 1125, 704], [905, 710, 1061, 709], [1116, 709, 1125, 708], [1147, 708, 1920, 701],
  [1147, 688, 1160, 691], [1147, 707, 1160, 702], [1179, 635, 1208, 650], [1232, 650, 1322, 620], [1232, 650, 1280, 674],
  [1304, 675, 1733, 630], [1341, 615, 1395, 614], [1341, 620, 1359, 620], [1341, 625, 1358, 631], [1380, 620, 1395, 619], [1380, 631, 1395, 625],
  [1415, 620, 1429, 612], [1452, 617, 1465, 622], [1452, 617, 1594, 625], [1494, 622, 1594, 633], [1494, 622, 1594, 659], [1494, 622, 1531, 657],
  [1506, 649, 1531, 665], [1506, 660, 1531, 665], [1554, 656, 1594, 651], [1613, 629, 1644, 638], [1617, 655, 1644, 643], [1670, 637, 1691, 640],
  [1711, 642, 1733, 635], [1711, 637, 1780, 649], [1752, 630, 1780, 641], [1752, 635, 1780, 645], [1799, 649, 1838, 643], [1799, 644, 1838, 670],
  [1788, 653, 1838, 697], [1851, 643, 1885, 615], [1851, 643, 1871, 639], [1851, 643, 1920, 643], [1851, 643, 1920, 657], [1851, 670, 1891, 673],
  [1851, 697, 1920, 687], [1851, 697, 1920, 697], [1851, 697, 1891, 711], [1867, 716, 1891, 716],
]
const wirePath = ([a, b, c, d]: number[]) => {
  const m = (c - a) / 2
  return `M${a} ${b}C${a + m} ${b} ${c - m} ${d} ${c} ${d}`
}
const loops = 'M1179 587C1215 587 1175 645 1208 645M1179 692C1206 692 1180 656 1208 656M1889 640C1905 640 1878 621 1885 621M1908 638C1895 650 1885 668 1891 668M1891 679C1885 690 1898 692 1912 706'
const nodeFill = (t?: string) => (t === 'd' ? '#8b8a9b' : t === 'y' ? '#fbf64a' : '#c9c9c9')
</script>

<template>
  <div class="desktop">
    <svg class="defs" width="0" height="0" aria-hidden="true">
      <defs>
        <linearGradient id="gPaper" x1="0" y1="0" x2="1" y2="1"><stop offset="0" stop-color="#fff" /><stop offset="1" stop-color="#dfe3ea" /></linearGradient>
        <radialGradient id="gGrey" cx=".35" cy=".35"><stop offset="0" stop-color="#fff" /><stop offset=".5" stop-color="#aaa" /><stop offset="1" stop-color="#444" /></radialGradient>
        <radialGradient id="gBall" cx=".35" cy=".3"><stop offset="0" stop-color="#fff" /><stop offset=".25" stop-color="#4a86f0" /><stop offset="1" stop-color="#04247c" /></radialGradient>
        <radialGradient id="gSky" cx=".4" cy=".3"><stop offset="0" stop-color="#fff" /><stop offset=".5" stop-color="#8cc8f8" /><stop offset="1" stop-color="#4a94e0" /></radialGradient>
        <linearGradient id="gHelp" x1="0" y1="0" x2="0" y2="1"><stop offset="0" stop-color="#8ea8f4" /><stop offset="1" stop-color="#2346b4" /></linearGradient>
        <linearGradient id="gHex" x1="0" y1="0" x2="0" y2="1"><stop offset="0" stop-color="#4a4a4a" /><stop offset=".5" stop-color="#222" /><stop offset="1" stop-color="#080808" /></linearGradient>
        <linearGradient id="gTile" x1="0" y1="0" x2="0" y2="1"><stop offset="0" stop-color="#eee" /><stop offset="1" stop-color="#777" /></linearGradient>
        <linearGradient id="gPink" x1="0" y1="0" x2="1" y2="0"><stop offset="0" stop-color="#ffc4e4" /><stop offset="1" stop-color="#e0007c" /></linearGradient>
        <linearGradient id="gGreen" x1="0" y1="0" x2="0" y2="1"><stop offset="0" stop-color="#b8ee90" /><stop offset="1" stop-color="#46b21e" /></linearGradient>
        <linearGradient id="gFire" x1="0" y1="0" x2="0" y2="1"><stop offset="0" stop-color="#ffb84a" /><stop offset="1" stop-color="#f07800" /></linearGradient>
        <radialGradient id="gOrb" cx=".5" cy=".85"><stop offset="0" stop-color="#5ff0ff" /><stop offset=".5" stop-color="#1f78b8" /><stop offset="1" stop-color="#1b3f6c" /></radialGradient>
      </defs>
    </svg>

    <main class="rhino">
      <header class="title">
        <svg class="appicon" viewBox="0 0 20 20"><rect width="20" height="20" fill="#111" /><path d="M0 4L7 3L9 8L15 9L19 6L18 13L12 16L4 14L0 9Z" fill="#eee" /><path d="M9 2L12 6L16 7L12 8Z" fill="#999" /></svg>
        <h1>2016-11-23 4° fresatura RhinoCam.3dm (556 KB) - Rhinoceros Corporate (64-bit) - [Prospettica]</h1>
      </header>
      <nav class="menu"><button v-for="m in rhinoMenu" :key="m">{{ m }}</button></nav>

      <section class="cmd">
        <div class="history">
          <p>Autosaving file as C:\Users\Andrea\AppData\Roaming\McNeel\Rhinoceros\5.0\AutoSave\2016-11-23 4° fresatura RhinoCam_RhinoAutosav</p>
          <p>Autosave completed successfully</p>
          <p>Command: _ViewCaptureToFile</p>
        </div>
        <div class="prompt"><label for="cmd">Command:</label><input id="cmd" v-model="command" type="text" /></div>
      </section>

      <section class="tools">
        <div class="tooltabs"><button v-for="(t, i) in toolTabs" :key="t" :class="{ on: i === 0 }">{{ t }}</button></div>
        <div class="strip first">
          <button v-for="n in row1" :key="n" class="ib" :class="{ fly: fly(n) }" :aria-label="name(n)"><svg viewBox="0 0 28 28" v-html="icons[name(n)]" /></button>
        </div>
      </section>
      <section class="strips">
        <div class="strip second">
          <button v-for="n in row2" :key="n" class="ib" :class="{ fly: fly(n) }" :aria-label="name(n)"><svg viewBox="0 0 28 28" v-html="icons[name(n)]" /></button>
          <button class="more">»</button>
        </div>
        <div class="strip third">
          <button v-for="n in row3" :key="n" class="ib" :aria-label="name(n)"><svg viewBox="0 0 28 28" v-html="icons[name(n)]" /></button>
        </div>
      </section>

      <div class="work">
        <aside class="side">
          <div class="sidegrid">
            <button v-for="(n, i) in side" :key="i" class="ib" :class="{ fly: fly(n) }" :aria-label="name(n)"><svg viewBox="0 0 28 28" v-html="icons[name(n)]" /></button>
          </div>
        </aside>
        <div class="viewcol">
          <div class="viewport">
            <svg class="scene" width="1856" height="838" viewBox="64 233 1856 838" fill="none" stroke="#980000">
              <ellipse cx="487" cy="388" rx="191" ry="64" transform="rotate(-3 487 388)" stroke-width="1.6" />
              <ellipse cx="925" cy="539" rx="156" ry="62" stroke-width="1.6" />
              <ellipse cx="905" cy="512" rx="78" ry="35" stroke-width="1.6" />
              <text x="490" y="395" class="two">2</text>
              <path d="M479 371L501 393M501 371L479 393M478 376V370H484M496 370H502V376M502 388V394H496M484 394H478V388" stroke-width="1.6" />
              <circle cx="490" cy="382" r="6" stroke-width="1.6" /><circle cx="490" cy="382" r="3" fill="#980000" />
              <path v-for="(a, i) in arrows" :key="i" :transform="`translate(${a[0]} ${a[1]}) rotate(${a[2]})`" d="M-5 0H4M0 -4L4 0L0 4" stroke-width="1.6" />
              <path :d="mass" fill="#980000" stroke="none" />
              <path :d="hole" fill="#a0a0a0" stroke="none" />
              <path :d="gapShape" fill="#a0a0a0" stroke="none" />
              <path v-for="(s, i) in streaks" :key="'s' + i" :d="asPath(s)" stroke="#a0a0a0" stroke-width="2.500" :stroke-dasharray="i % 2 ? '3 4 4 5' : '3 6 2 4'" />
              <rect v-for="(s, i) in specks" :key="'k' + i" :x="s[0]" :y="s[1]" width="2" height="1" fill="#b07a76" stroke="none" />
              <path :d="massCrosses" stroke-width="2.2" />
            </svg>
            <div class="vlabel"><span>Prospettica</span><button aria-label="Viewport menu"></button></div>
            <svg class="axis" width="48" height="64" viewBox="0 0 48 64" stroke="#666" fill="none">
              <path d="M27 45V13M27 45L10 33M27 45L10 53" />
              <g fill="#555" stroke="none" font-family="Liberation Sans" font-size="14"><text x="29" y="17">z</text><text x="9" y="34">x</text><text x="4" y="54">y</text></g>
            </svg>
          </div>
          <div class="viewtabs">
            <button v-for="(t, i) in viewTabs" :key="t" :class="{ on: i === 0 }">{{ t }}</button>
            <button class="add" aria-label="New viewport"><svg width="10" height="10" viewBox="0 0 10 10"><path d="M3.500 .5H6.500V3.500H9.500V6.500H6.500V9.500H3.500V6.500H.5V3.500H3.500Z" fill="#eee" stroke="#555" /></svg></button>
          </div>
        </div>
      </div>

      <div class="osnap">
        <label v-for="(s, i) in snaps" :key="s.label" :class="{ round: i > 10 }"><input v-model="s.on" type="checkbox" /><span>{{ s.label }}</span></label>
      </div>
      <footer class="status">
        <span class="w67">CPlane</span><span class="w88">x 91.128</span><span class="w88">y 31.206</span><span class="w88">z 0.000</span><span class="w88">Millimeters</span>
        <span class="layer"><i></i>0</span>
        <button class="w91">Grid Snap</button><button class="w58">Ortho</button><button class="w64 on">Planar</button><button class="w64 on">Osnap</button><button class="w105">SmartTrack</button><button class="w77 on">Gumball</button><button class="w131">Record History</button><button class="w53">Filter</button>
        <span class="rest">Minutes from last save: 30</span>
      </footer>
    </main>

    <section class="gh">
      <header class="ghtitle">
        <h2>Grasshopper - 2016-11-23 4° fresatura RhinoCam*</h2>
        <div class="winbtns">
          <button aria-label="Minimize"><svg width="18" height="16" viewBox="0 0 18 16"><rect x="1.500" y="9.500" width="15" height="4" fill="#fff" stroke="#555" /></svg></button>
          <button aria-label="Maximize"><svg width="18" height="16" viewBox="0 0 18 16"><path d="M.5 1.500H17.500V14.500H.5ZM5 6V10.500H13V6Z" fill="#fff" stroke="#556" fill-rule="evenodd" /></svg></button>
          <button class="close" aria-label="Close"><svg width="18" height="16" viewBox="0 0 18 16"><path d="M2 1.500H6.500L9 5L11.500 1.500H16L11.500 8L16 14.500H11.500L9 11L6.500 14.500H2L6.500 8Z" fill="#fff" stroke="#555" /></svg></button>
        </div>
      </header>
      <div class="ghbody">
        <nav class="ghmenu"><button v-for="m in ghMenu" :key="m">{{ m }}</button><span>2016-11-23 4° fresatura RhinoCam*</span></nav>
        <div class="ghtabs"><button v-for="(t, i) in ghTabs" :key="t" :class="{ on: i === 0 }">{{ t }}</button></div>
        <div class="ribbon">
          <section v-for="g in ribbon" :key="g.name" class="panel">
            <div class="panelrow">
              <div v-for="(part, i) in g.parts" :key="i" class="part">
                <div v-for="(col, j) in part" :key="j" class="col">
                  <button v-for="n in col" :key="n" class="ib" :aria-label="n"><svg viewBox="0 0 28 28" v-html="icons[n]" /></button>
                </div>
              </div>
            </div>
            <footer><span>{{ g.name }}</span><i></i></footer>
          </section>
        </div>
        <div class="ghbar">
          <button class="ib" aria-label="Open"><svg viewBox="0 0 28 28" v-html="icons.ghOpen" /></button>
          <button class="ib" aria-label="Save"><svg viewBox="0 0 28 28" v-html="icons.ghSave" /></button>
          <hr />
          <div class="combo"><select v-model="zoomLevel" aria-label="Zoom"><option>26%</option><option>50%</option><option>100%</option></select></div>
          <button class="ib" aria-label="Zoom extents"><svg viewBox="0 0 28 28" v-html="icons.ghZoom" /></button><i class="dd"></i>
          <button class="ib" aria-label="Named views"><svg viewBox="0 0 28 28" v-html="icons.ghEye" /></button><i class="dd"></i>
          <button class="ib" aria-label="Sketch"><svg viewBox="0 0 28 28" v-html="icons.ghPen" /></button>
          <div class="grow"></div>
          <button class="ib" aria-label="No preview"><svg viewBox="0 0 28 28" v-html="icons.cyGrey" /></button>
          <button class="ib" aria-label="Wireframe preview"><svg viewBox="0 0 28 28" v-html="icons.cyWire" /></button>
          <button class="ib sel" aria-label="Shaded preview"><svg viewBox="0 0 28 28" v-html="icons.cyRed" /></button>
          <hr />
          <button class="ib" aria-label="Selected only"><svg viewBox="0 0 28 28" v-html="icons.cyGreen" /></button>
          <button class="ib" aria-label="Document preview"><svg viewBox="0 0 28 28" v-html="icons.halfBall" /></button>
          <hr class="tight" />
          <button class="ib" aria-label="Mesh quality"><svg viewBox="0 0 28 28" v-html="icons.octo" /></button><i class="dd"></i>
        </div>
        <div class="canvas">
          <svg class="graph" width="1005" height="879" viewBox="915 201 1005 879" fill="none">
            <rect v-for="(g, i) in groups" :key="'g' + i" :x="g[0]" :y="g[1]" :width="g[2]" :height="g[3]" fill="#b9a3e7" stroke="#a290c6" />
            <g stroke="#4a4358" stroke-width="1.1">
              <path v-for="(w, i) in wires" :key="'w' + i" :d="wirePath(w)" />
              <path :d="loops" />
            </g>
            <rect v-for="(n, i) in nodes" :key="'n' + i" :x="n[0]" :y="n[1]" :width="n[2]" :height="n[3]" :fill="nodeFill(n[4])" stroke="#333" stroke-width="1.4" />
            <g v-for="(s, i) in sliders" :key="'l' + i" stroke="#333">
              <rect :x="s[0]" :y="s[1]" :width="s[2]" height="5" fill="#c9c9c9" /><rect :x="s[0]" :y="s[1]" :width="s[3]" height="5" fill="#8b8a9b" />
            </g>
          </svg>
          <div class="scroller"></div>
          <svg class="compass" width="52" height="60" viewBox="0 0 52 60">
            <path d="M8 31Q7 15 17 9Q26 4 37 8L36 11Q24 10 17 16Q12 22 12 31Z" fill="#000" /><path d="M1 11L8 10L11 16L5 19Z" fill="#000" />
            <circle cx="29" cy="29" r="19.500" fill="url(#gDial)" stroke="#444" stroke-width="1.5" /><circle cx="29" cy="29" r="18" fill="none" stroke="#fff" stroke-width="2" />
            <path d="M14 16L17 22L12 22ZM37 13L43 15L38 19ZM44 43L45 36L41 40ZM16 44L22 45L19 40Z" fill="#fff" />
            <defs><radialGradient id="gDial"><stop offset="0" stop-color="#f2f2f2" /><stop offset="1" stop-color="#bdbdbd" /></radialGradient></defs>
          </svg>
        </div>
        <footer class="ghstatus"><span>...</span><b>0.9.0076</b>
          <svg width="12" height="12" viewBox="0 0 12 12" fill="#aaa"><path d="M8 0h2v2h-2zM8 4h2v2h-2zM8 8h2v2h-2zM4 4h2v2h-2zM4 8h2v2h-2zM0 8h2v2h-2z" /></svg>
        </footer>
      </div>
    </section>

    <nav class="taskbar">
      <button class="orb" aria-label="Start">
        <svg width="46" height="46" viewBox="0 0 46 46"><circle cx="23" cy="23" r="21" fill="url(#gOrb)" stroke="#9fc0da" stroke-width="1.5" /><path d="M5 19Q10 4 23 4Q36 4 41 19Q23 25 5 19Z" fill="#fff" opacity=".3" />
          <path d="M14 12Q18 9 22 12L20 22Q16 19 12 22Z" fill="#f0642a" /><path d="M24 13Q29 15 34 12L31 22Q27 25 22 22Z" fill="#8ac63c" /><path d="M12 24Q16 21 20 24L18 33Q14 31 10 33Z" fill="#3fa0e8" /><path d="M22 24Q27 27 31 24L28 34Q24 37 20 34Z" fill="#fccb2c" /></svg>
      </button>
      <button class="slot" aria-label="Cleaner">
        <svg width="44" height="46" viewBox="0 0 44 46"><path d="M38 8Q26 0 16 8Q8 16 12 28Q18 44 38 42L37 33Q26 34 24 26Q20 16 27 14Q32 12 36 15Z" fill="#d02a1c" stroke="#8a1208" /><path d="M27 5L30 6L22 26L18 24Z" fill="#2a6ad0" /><path d="M16 21L25 26L21 31L12 28Z" fill="#3c78cc" /><path d="M12 26L21 31Q16 38 14 42Q6 40 2 33Q8 32 12 26Z" fill="#f0c8a0" stroke="#b8845a" /></svg>
      </button>
      <button class="slot" aria-label="Mail">
        <svg width="44" height="46" viewBox="0 0 44 46"><path d="M4 9Q4 4 9 4H35V36H4Z" fill="#f8a91c" stroke="#d88408" /><path d="M8 12L37 9L42 34L12 40Z" fill="#fff" stroke="#ccc" /><path d="M3 20L20 30L40 16V40H3Z" fill="#ffd45a" stroke="#e0981a" /><circle cx="25" cy="28" r="10.500" fill="#ffe9a0" stroke="#e8a418" stroke-width="3" /><path d="M20 23L25 30L32 22" fill="none" stroke="#a86a08" stroke-width="2" /></svg>
      </button>
      <button class="task">
        <svg width="38" height="44" viewBox="0 0 38 44"><circle cx="19" cy="21" r="18" fill="#fff" /><path d="M19 3A18 18 0 0 1 34.600 12H19A9 9 0 0 0 11 17L3.800 11A18 18 0 0 1 19 3Z" fill="#dc4437" /><path d="M34.600 12A18 18 0 0 1 19 39L27 25A9 9 0 0 0 25 13L24 12Z" fill="#fcc934" /><path d="M3.800 11L11 25A9 9 0 0 0 21 30L19 39A18 18 0 0 1 3.800 11Z" fill="#22a060" /><circle cx="19" cy="21" r="9" fill="#fff" /><circle cx="19" cy="21" r="7" fill="#4688f1" /><path d="M25 26H33V37H31V42H27V37H25Z" fill="#fff" stroke="#999" /></svg>
        <span>Modifica arti...</span>
      </button>
      <button class="slot" aria-label="Calculator">
        <svg width="32" height="42" viewBox="0 0 32 42"><rect x="3" y="3" width="26" height="37" rx="1" fill="#bcdaf0" stroke="#7ba6cc" stroke-width="2" /><rect x="6" y="6" width="20" height="3" fill="#f5a73c" /><rect x="6" y="10" width="20" height="8" fill="#e4f2fc" stroke="#88a" /><g fill="#4c80b4"><path d="M6 22h4v3h-4zM11 22h4v3h-4zM16 22h4v3h-4zM22 22h4v3h-4zM6 27h4v3h-4zM11 27h4v3h-4zM16 27h4v3h-4zM22 27h4v3h-4zM6 32h4v3h-4zM11 32h4v3h-4zM16 32h4v3h-4z" /></g><rect x="22" y="31" width="4" height="6" fill="#f0902a" /><text x="22" y="17" font-size="7" font-family="Liberation Sans" fill="#333">0</text></svg>
      </button>
      <button class="task">
        <svg width="38" height="44" viewBox="0 0 38 44"><path d="M7 4H29L37 12V42H7Z" fill="#f4f8fe" stroke="#7890b8" /><path d="M29 4V12H37" fill="#cfdcf0" stroke="#7890b8" /><path d="M16 16H34M12 24H34M12 28H34M12 32H34M12 36H34" stroke="#86a8dc" stroke-width="1.5" /><path d="M0 7L18 5V22L0 20Z" fill="#3a66bc" stroke="#fff" /><text x="9" y="18" text-anchor="middle" font-size="12" font-weight="700" font-family="Liberation Serif" fill="#fff">W</text></svg>
        <span>Documento1...</span>
      </button>
      <button class="slot" aria-label="Spreadsheet">
        <svg width="40" height="42" viewBox="0 0 40 42"><path d="M6 3H32V12H38V38L14 34H2V14Z" fill="#4aa83a" stroke="#e8f4e4" stroke-width="1.5" /><path d="M12 12H38V38L10 34Z" fill="#fff" stroke="#58a04a" /><path d="M28 15H35V20H28ZM28 22H35V27H28ZM28 29H35V34H28ZM19 28H26V34H19ZM12 28H17V33H12Z" fill="#62b04e" /><text x="15" y="25" text-anchor="middle" font-size="22" font-weight="700" font-family="Liberation Sans" fill="#1d6a1a">X</text></svg>
      </button>
      <button class="slot" aria-label="Caliper">
        <svg width="42" height="44" viewBox="0 0 42 44"><path d="M2 8H34V12H33V16H31V12H28V15H26V12H23V16H21V12H14V40H17V42H7V40H9V12H6V15H2Z" fill="#f4f6ee" /><rect x="9" y="3" width="5" height="8" fill="#fff" /><text x="26" y="40" text-anchor="middle" font-size="25" font-weight="700" font-family="Liberation Sans" fill="#f4eab0">15</text></svg>
      </button>
      <button class="slot" aria-label="CAD">
        <svg width="40" height="42" viewBox="0 0 40 42"><rect width="40" height="42" fill="#d9b6ba" /><path d="M0 0H40V16Q16 18 0 36Z" fill="#eadde0" /><path d="M18 3H24L34 32L20 26L8 31Z" fill="#c81a1e" /><path d="M18 3L20 12L15 22L8 31Z" fill="#8e0c10" /><path d="M20 15L25 25L17 24Z" fill="#eadde0" /></svg>
      </button>
      <button class="slot" aria-label="Revit">
        <svg width="40" height="42" viewBox="0 0 40 42"><rect width="40" height="42" fill="#c6dcf4" /><path d="M0 0H40V14Q16 18 0 34Z" fill="#e6eefa" /><text x="21" y="35" text-anchor="middle" font-size="37" font-weight="700" font-family="Liberation Sans" fill="#2272b8">R</text></svg>
      </button>
      <button class="task light">
        <svg width="40" height="42" viewBox="0 0 40 42"><rect width="40" height="42" fill="#161616" /><path d="M2 12L4 4L8 12L14 17L21 8L17 3L25 8L20 16L25 20L35 18L37 22L34 30L33 40H30L24 32L15 28L8 24L3 20Z" fill="#f2f2f2" /><path d="M10 2L16 8L21 10L16 13Z" fill="#888" /><path d="M17 22L23 25" stroke="#d22" stroke-width="1.5" /></svg>
        <span>2016-11-23 ...</span>
      </button>
      <button class="slot" aria-label="Viewer">
        <svg width="40" height="42" viewBox="0 0 40 42"><rect width="40" height="42" rx="3" fill="#a80c20" /><circle cx="20" cy="21" r="6" fill="#f0c4cc" /><path d="M31 7L37 14M3 26L10 34" stroke="#f0c4cc" stroke-width="7" stroke-linecap="round" /></svg>
      </button>
      <button class="slot" aria-label="Photoshop">
        <svg width="40" height="40" viewBox="0 0 40 40"><path d="M2 4L5 2H38V36L35 38H2Z" fill="#083c7c" /><rect x="5" y="3" width="33" height="33" fill="#0c64b4" /><text x="21" y="27" text-anchor="middle" font-size="21" font-weight="700" font-family="Open Sans" fill="#6cd4fc">Ps</text></svg>
      </button>
      <button class="slot" aria-label="Illustrator">
        <svg width="40" height="40" viewBox="0 0 40 40"><path d="M2 4L5 2H38V36L35 38H2Z" fill="#a45404" /><rect x="5" y="3" width="33" height="33" fill="#ec8c08" /><text x="21" y="27" text-anchor="middle" font-size="21" font-weight="700" font-family="Open Sans" fill="#fdf094">Ai</text></svg>
      </button>
      <button v-for="n in 2" :key="n" class="task folder">
        <svg width="36" height="42" viewBox="0 0 36 42"><path d="M4 4L10 2V39L4 34Z" fill="#f0cf66" /><path d="M10 3L24 5V37L12 40Z" fill="#fbe79a" stroke="#d8b04a" /><path d="M5 5L17 9V35L9 41L5 36Z" fill="#e8c35a" /><path d="M17 9L26 5L28 34L18 37Z" fill="#f8df86" stroke="#c9a038" /></svg>
        <span>C:\Users\And...</span>
      </button>
      <div class="grow"></div>
      <div class="tray">
        <button class="up" aria-label="Show hidden icons"><svg width="10" height="6" viewBox="0 0 10 6"><path d="M5 0L10 6H0Z" fill="#fff" /></svg></button>
        <button aria-label="Antivirus"><svg width="22" height="22" viewBox="0 0 22 22"><path d="M8 3Q16 1 20 2L18 9Q22 14 19 20L13 18Q6 23 2 19Q6 15 3 12Q3 6 8 3Z" fill="#ff7a10" /><text x="11" y="16" text-anchor="middle" font-size="14" font-weight="700" font-family="Open Sans" fill="#fff">a</text></svg></button>
        <button aria-label="Volume"><svg width="22" height="22" viewBox="0 0 22 22"><path d="M2 7H6L11 2V20L6 15H2Z" fill="#fff" stroke="#456" /><path d="M13 8Q15 11 13 14M16 6Q19 11 16 16M18 3Q23 11 18 19" fill="none" stroke="#fff" stroke-width="1.3" /></svg></button>
        <button aria-label="Network"><svg width="22" height="22" viewBox="0 0 22 22"><path d="M7 6H20V15H7Z" fill="#34566e" stroke="#fff" stroke-width="1.5" /><path d="M13 15V19M9 19H18M2 3H7V9H2ZM4 9V20H8" fill="none" stroke="#fff" stroke-width="1.5" /></svg></button>
        <time>18:18<br />26/09/2017</time>
        <button class="peek" aria-label="Show desktop"></button>
      </div>
    </nav>
  </div>
</template>

<style>
body { margin: 0; background: #dfe2ea; }
</style>

<style scoped>
.desktop { position: relative; display: flex; flex-direction: column; min-height: 100vh; overflow: hidden; font-family: 'Open Sans', 'Noto Sans', sans-serif; font-size: 14px; color: #111; }
.desktop * { box-sizing: border-box; }
button { font: inherit; color: inherit; background: none; border: 0; padding: 0; margin: 0; white-space: nowrap; }
h1, h2, p { margin: 0; font-weight: 400; font-size: 14px; }
svg { display: block; flex: none; }
.defs { position: absolute; }
.grow { flex: 1; }
.ib { position: relative; width: 28px; height: 28px; flex: none; }
.ib svg { width: 28px; height: 28px; }
.fly::after { content: ''; position: absolute; right: 1px; bottom: 1px; border: 3px solid #70747c; border-top-color: transparent; border-left-color: transparent; }

.rhino { flex: 1; display: flex; flex-direction: column; background: #dfe2ea; }
.title { display: flex; align-items: center; gap: 5px; height: 27px; padding-top: 2px; background: linear-gradient(90deg, #c4dcf4 0, #b3cfec 30%, #a4c3e2 38%, #8eb0d2 60%, #3a4c66 100%); border-bottom: 2px solid #44617c; }
.title h1 { font-size: 14px; white-space: nowrap; }
.appicon { width: 20px; height: 20px; }
.menu { display: flex; gap: 15px; height: 25px; padding: 2px 0 0 7px; align-items: center; color: #6e7076; background: linear-gradient(#fcfcff, #e4e8f4 40%, #d5dbee); border-bottom: 1px solid #b6bccd; }
.cmd { margin: 3px 0 0 6px; border-left: 1px solid #a7acc0; background: #fff; font: 15px/17px 'Liberation Sans', sans-serif; color: #000; }
.history { height: 53px; padding-left: 1px; border-bottom: 1px solid #9aa1b8; }
.history p { font-size: 15px; white-space: nowrap; }
.prompt { display: flex; height: 21px; padding-left: 1px; align-items: center; font-weight: 700; }
.prompt input { flex: 1; border: 0; outline: 0; background: none; font: inherit; padding: 0 4px; }
.tools { margin-top: 4px; padding-top: 4px; border-top: 1px solid #b9bed0; }
.tooltabs { display: flex; height: 20px; padding-left: 7px; font: 13px/21px 'Liberation Sans', sans-serif; color: #000; border-bottom: 1px solid #a7aec2; margin-bottom: -1px; overflow: hidden; }
.tooltabs button { position: relative; z-index: 0; margin-right: -7px; padding: 0 14px 0 18px; }
.tooltabs button:first-child { padding-left: 13px; }
.tooltabs button::before, .tooltabs button::after { content: ''; position: absolute; z-index: -1; inset: 0; background: #9aa3bb; clip-path: polygon(13px 0, calc(100% - 3px) 0, 100% 3px, 100% 100%, 0 100%); }
.tooltabs button::after { inset: 1px 1px 0 1px; background: #d3d9ec; }
.tooltabs .on::after { background: #fff; }
.strip { display: flex; align-items: center; background: linear-gradient(#fdfdfe, #eceef4 60%, #dfe2ea); }
.first { height: 31px; padding-left: 7px; border-bottom: 1px solid #c4c8d6; }
.strips { display: flex; margin: 4px 0 0 4px; }
.second, .third { border-left: 1px solid #b9bed0; height: 33px; }
.second { padding: 0 20px 0 2px; border-right: 1px solid #c4c8d6; }
.third { flex: 1; margin-left: 7px; }
.more { margin-left: 1px; font: 700 17px/20px 'Liberation Sans', sans-serif; }
.work { flex: 1; display: flex; margin-top: 8px; }
.side { width: 64px; }
.side::before { content: ''; display: block; height: 3px; margin: 0 6px 3px 3px; border: solid #b3b8c8; border-width: 1px 0; }
.sidegrid { display: grid; grid-template-columns: 28px 28px; grid-auto-rows: 28px; padding-left: 1px; align-items: center; }
.viewcol { flex: 1; min-width: 0; display: flex; flex-direction: column; }
.viewport { position: relative; flex: 1; min-height: 600px; background: #a0a0a0; overflow: hidden; border-bottom: 1px solid #9aa3bb; }
.scene { position: absolute; left: 0; top: 0; }
.two { font: 700 34px 'Open Sans', sans-serif; text-anchor: middle; fill: #a04e16; stroke: none; }
.vlabel { position: relative; display: inline-flex; align-items: center; height: 24px; padding: 0 0 1px 10px; background: #7f9dbf; }
.vlabel button { width: 11px; height: 18px; margin-left: 9px; border-left: 1px solid #111; }
.vlabel button::after { content: ''; display: block; margin-left: 1px; width: 0; border: 4px solid transparent; border-top-color: #000; border-bottom: 0; }
.axis { position: absolute; left: 10px; bottom: 12px; }
.viewtabs { display: flex; height: 26px; }
.viewtabs button { position: relative; z-index: 0; height: 26px; padding: 0 9px 1px 14px; }
.viewtabs button::before, .viewtabs button::after { content: ''; position: absolute; z-index: -1; inset: 0; background: #a3abc0; clip-path: polygon(0 0, 100% 0, 100% calc(100% - 2px), calc(100% - 2px) 100%, 9px 100%, 0 14px); }
.viewtabs button::after { inset: 0 1px 1px 1px; background: #d3d9ec; }
.viewtabs .on::after { background: #fff; }
.viewtabs .add { padding: 0 12px 0 18px; }
.viewtabs .add::after { background: #e4e7ef; }
.osnap { display: flex; align-items: center; gap: 4px; height: 32px; padding: 3px 0 0 9px; font: 14px/20px 'Liberation Sans', sans-serif; color: #000; }
.osnap label { display: flex; align-items: center; gap: 4px; }
.osnap input { appearance: none; width: 20px; height: 20px; margin: 0; border: 1px solid #8a8e96; background: linear-gradient(135deg, #d4d8de, #fff); box-shadow: inset 0 0 0 3px #f4f4f4, inset 0 0 0 4px #c8ccd2; display: grid; place-items: center; }
.osnap input:checked::before { content: ''; width: 10px; height: 12px; background: #3d57a4; clip-path: polygon(0 55%, 20% 45%, 38% 70%, 85% 0, 100% 5%, 45% 100%, 30% 100%); }
.osnap .round input { border-radius: 3px; width: 19px; height: 19px; background: linear-gradient(#f8f8f8, #d4d4d4); box-shadow: inset 0 0 0 1px #fff; }
.status { display: flex; height: 22px; border-top: 1px solid #a4abbe; font: 14px/23px 'Liberation Sans', sans-serif; color: #000; white-space: nowrap; }
.status > * { height: 21px; border-right: 1px solid #a4abbe; text-align: center; flex: none; }
.status .on { background: #e2f0fb; font-weight: 700; }
.status .rest { flex: 1; text-align: left; padding-left: 2px; margin-right: 8px; }
.status .layer { width: 173px; display: flex; align-items: center; gap: 2px; padding-left: 2px; }
.status .layer i { width: 17px; height: 16px; background: #000; }
.w53 { width: 53px; } .w58 { width: 58px; } .w64 { width: 64px; } .w67 { width: 68px; } .w77 { width: 77px; } .w88 { width: 88px; } .w91 { width: 91px; } .w105 { width: 105px; } .w131 { width: 131px; }

.gh { position: absolute; left: 906px; right: 3px; top: 2px; bottom: 88px; display: flex; flex-direction: column; padding: 0 8px 7px 7px; border: 1px solid #1d2733; border-radius: 7px; background: linear-gradient(#a9cbee 0, #a9cbee 18%, #768fae 30%, #7b93b0 55%, #6f86a2 85%, #a4c4ea 90%); box-shadow: inset 0 0 0 1px #dcebfa, 0 4px 12px 2px rgba(0, 0, 0, .65); }
.ghtitle { display: flex; justify-content: space-between; height: 32px; margin: 1px -7px 0 -6px; padding-left: 6px; border-radius: 5px 5px 0 0; overflow: hidden;
  background:
    linear-gradient(transparent 66%, #a6c8ec 80%),
    linear-gradient(90deg, #c0daf4 0, #a6caee 30%, transparent 36%),
    radial-gradient(ellipse 24px 22px at 515px 8px, #6fb0e8, transparent), radial-gradient(ellipse 26px 16px at 575px 4px, #5c98d0, transparent), radial-gradient(ellipse 26px 16px at 638px 3px, #5c98d0, transparent), radial-gradient(ellipse 26px 16px at 700px 4px, #5c98d0, transparent), radial-gradient(ellipse 24px 16px at 762px 4px, #5a90c8, transparent), radial-gradient(ellipse 60px 24px at 850px 6px, #84b0dc, transparent),
    #27405c; }
.ghtitle h2 { line-height: 32px; }
.winbtns { display: flex; height: 23px; margin-right: 7px; border: 1px solid #dbe9f6; border-top: 0; border-radius: 0 0 5px 5px; overflow: hidden; }
.winbtns button { display: grid; place-items: center; width: 34px; border-right: 1px solid #cfdce8; background: linear-gradient(#8ea4ba, #6c8298 48%, #44586e 52%, #7590aa); }
.winbtns .close { width: 59px; border: 0; background: linear-gradient(#e0998a, #cf5a44 48%, #b62c14 52%, #dc6a4c); }
.ghbody { flex: 1; display: flex; flex-direction: column; min-height: 0; border: 1px solid #44606e; background: #f0f0f0; overflow: hidden; }
.ghmenu { display: flex; align-items: center; gap: 20px; height: 25px; padding: 3px 10px 0 16px; background: linear-gradient(90deg, #f0f0f0, #fdfdfd 60%); font: 14px/20px 'Liberation Sans', sans-serif; color: #000; }
.ghmenu span { margin-left: auto; }
.ghtabs { display: flex; height: 23px; font: 13px/24px 'Liberation Sans', sans-serif; color: #757575; border-bottom: 1px solid #a4a4a4; }
.ghtabs button { padding: 0 9px; }
.ghtabs .on { color: #000; padding: 0 6px 4px 8px; background: #fff; border: 1px solid #999; border-bottom: 0; border-radius: 6px 6px 0 0; height: 23px; line-height: 18px; }
.ribbon { display: flex; gap: 4px; height: 84px; padding: 2px 2px 0; background: linear-gradient(#d4d4d4, #f4f4f4); border-radius: 0 8px 0 0; border-bottom: 2px solid #777; }
.panel { height: 73px; border: 1px solid #777; border-radius: 4px; overflow: hidden; background: linear-gradient(#e6e6e6, #cfcfcf); }
.panelrow { display: flex; height: 58px; padding: 1px; }
.part { display: flex; }
.part + .part { padding-left: 10px; background: linear-gradient(#aaa, #aaa) 4px 6px / 1px 44px no-repeat; }
.col { display: flex; flex-direction: column; }
.panel footer { display: flex; height: 14px; background: linear-gradient(#2c2c2c, #111); color: #fff; font: 10px/13px 'Liberation Sans', sans-serif; }
.panel footer span { flex: 1; text-align: center; }
.panel footer i { width: 7px; height: 7px; margin: 3px 2px 0 0; background: linear-gradient(#aaa, #aaa) 3px 0 / 1px 7px no-repeat, linear-gradient(#aaa, #aaa) 0 3px / 7px 1px no-repeat; }
.ghbar { display: flex; align-items: center; height: 32px; padding: 0 0 0 3px; background: linear-gradient(90deg, #f4f4f4, #fff); }
.ghbar hr { width: 1px; height: 20px; margin: 0 7px; border: 0; background: #bbb; }
.ghbar hr:first-of-type { margin: 0 4px 0 5px; }
.ghbar .tight { margin: 0 3px 0 2px; }
.ghbar .ib + .ib { margin-left: 1px; }
.ghbar .sel { outline: 1px solid #3399ff; }
.combo { position: relative; width: 92px; margin-right: 2px; }
.combo select { width: 92px; height: 29px; appearance: none; border: 1px solid #e0e2e6; background: #fff; font: 15px 'Open Sans', sans-serif; padding: 0 3px; color: #111; }
.combo::after { content: ''; position: absolute; right: 5px; top: 12px; border: 5px solid transparent; border-top-color: #000; border-bottom: 0; }
.dd { width: 0; height: 0; margin: 0 4px 0 1px; border: 3px solid transparent; border-top-color: #000; border-bottom: 0; }
.canvas { position: relative; flex: 1; min-height: 400px; background: #d4d0c8; overflow: hidden; }
.graph { position: absolute; left: 0; top: 0; }
.scroller { position: absolute; left: 0; bottom: 0; width: 7px; height: 28px; border: 1px solid #111; border-left: 0; background: linear-gradient(#eee, #666); }
.compass { position: absolute; right: 7px; bottom: 0; }
.ghstatus { display: flex; align-items: center; height: 23px; padding: 2px 3px 0 5px; border-top: 2px solid #fff; background: linear-gradient(90deg, #f0f0f0, #fcfcfc); font: 14px/20px 'Liberation Sans', sans-serif; color: #777; }
.ghstatus span { color: #000; font-size: 10px; }
.ghstatus b { margin-left: auto; font-weight: 400; }
.ghstatus svg { margin: 5px 0 0 12px; }

.taskbar { position: relative; display: flex; align-items: center; height: 48px; color: #fff; border-top: 1px solid #14202e; font-size: 14px;
  background:
    radial-gradient(ellipse 28px 20px at 1690px 2px, #86a8c8 70%, transparent), radial-gradient(ellipse 30px 20px at 1690px 50px, #6a8ba8 60%, transparent),
    radial-gradient(ellipse 70px 60px at 1780px 20px, #86a6c6 70%, transparent), radial-gradient(ellipse 70px 50px at 1590px 24px, #84a4c4 70%, transparent),
    radial-gradient(ellipse 50px 30px at 1890px 38px, #56728e 60%, transparent), radial-gradient(ellipse 20px 22px at 1530px 4px, #9ab8d4, transparent), radial-gradient(ellipse 26px 28px at 1440px 28px, #8eb0d0, transparent), radial-gradient(ellipse 26px 30px at 1350px 20px, #86a8c8, transparent),
    linear-gradient(90deg, #3d5c7e 0, #33547a 20%, #35557a 32%, #27425f 36%, #27425f 54%, #54708c 56%, #60809e 68%, #38506c 72%, #30475f 88%, #101c34 92%, #0f1b30 100%); }
.taskbar .orb { width: 70px; padding-left: 10px; }
.slot { width: 70px; display: grid; place-items: center; flex: none; }
.task { display: flex; align-items: center; gap: 5px; width: 158px; height: 46px; margin: 0 2px; padding-left: 10px; border: 1px solid #a3b4c6; border-radius: 3px; background: linear-gradient(160deg, rgba(255, 255, 255, .42), rgba(255, 255, 255, .2) 48%, rgba(255, 255, 255, .08) 52%); flex: none; }
.light { background: linear-gradient(160deg, #dfe5ea, #b9c3cc 50%, #8e9aa6); border-color: #eef4fa; padding-left: 8px; }
.folder { width: 160px; margin: 0; gap: 16px; }
.folder + .folder { border-left: 0; }
.tray { display: flex; align-items: center; gap: 8px; text-align: center; }
.tray .up { margin-right: 5px; }
.tray time { line-height: 22px; width: 84px; margin-left: 9px; padding-top: 3px; }
.peek { width: 14px; height: 48px; border: 1px solid #8aa; background: linear-gradient(90deg, #54708c, #2c4460); }
</style>
